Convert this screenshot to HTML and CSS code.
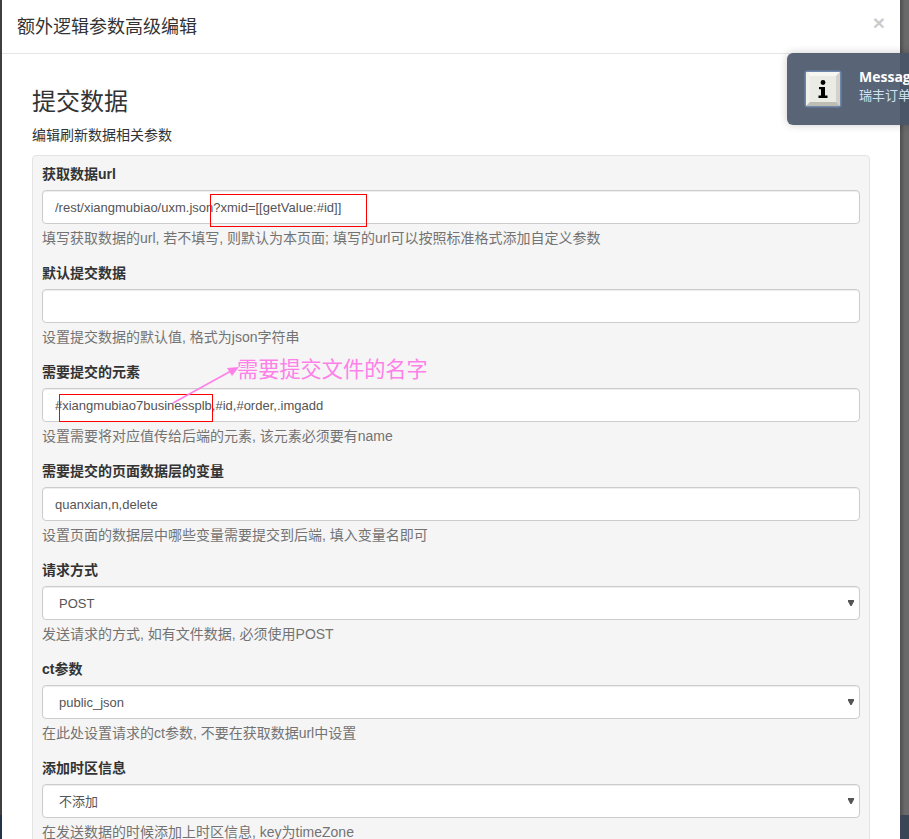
FILE: index.html
```html
<!DOCTYPE html>
<html lang="zh-CN">
<head>
<meta charset="utf-8">
<title>额外逻辑参数高级编辑</title>
<link rel="stylesheet" href="styles.css">
</head>
<body>
<div class="page">
  <div class="strip-left"></div>
  <main class="modal">
    <header class="modal-header">
      <h4 class="modal-title">额外逻辑参数高级编辑</h4>
      <span class="close">×</span>
    </header>
    <div class="modal-body">
      <h3 class="section-title">提交数据</h3>
      <p class="section-desc">编辑刷新数据相关参数</p>
      <form class="well">
        <div class="form-group">
          <label class="field-label">获取数据url</label>
          <input class="form-control" type="text" value="/rest/xiangmubiao/uxm.json?xmid=[[getValue:#id]]">
          <span class="help-block">填写获取数据的url, 若不填写, 则默认为本页面; 填写的url可以按照标准格式添加自定义参数</span>
        </div>
        <div class="form-group">
          <label class="field-label">默认提交数据</label>
          <input class="form-control" type="text" value="">
          <span class="help-block">设置提交数据的默认值, 格式为json字符串</span>
        </div>
        <div class="form-group">
          <label class="field-label">需要提交的元素</label>
          <input class="form-control" type="text" value="#xiangmubiao7businessplb,#id,#order,.imgadd">
          <span class="help-block">设置需要将对应值传给后端的元素, 该元素必须要有name</span>
        </div>
        <div class="form-group">
          <label class="field-label">需要提交的页面数据层的变量</label>
          <input class="form-control" type="text" value="quanxian,n,delete">
          <span class="help-block">设置页面的数据层中哪些变量需要提交到后端, 填入变量名即可</span>
        </div>
        <div class="form-group">
          <label class="field-label">请求方式</label>
          <select class="form-control form-select"><option>POST</option></select>
          <span class="help-block">发送请求的方式, 如有文件数据, 必须使用POST</span>
        </div>
        <div class="form-group">
          <label class="field-label">ct参数</label>
          <select class="form-control form-select"><option>public_json</option></select>
          <span class="help-block">在此处设置请求的ct参数, 不要在获取数据url中设置</span>
        </div>
        <div class="form-group">
          <label class="field-label">添加时区信息</label>
          <select class="form-control form-select"><option>不添加</option></select>
          <span class="help-block">在发送数据的时候添加上时区信息, key为timeZone</span>
        </div>
      </form>
    </div>
  </main>
  <div class="strip-right"></div>

  <div class="mark mark-url"></div>
  <div class="mark mark-element"></div>
  <svg class="arrow" width="70" height="40" viewBox="0 0 70 40" aria-hidden="true">
    <path d="M2 38 L60 6" stroke="#ff80e8" stroke-width="1.6" fill="none"/>
    <path d="M68 2 L56 3 L61 11 Z" fill="#ff80e8"/>
  </svg>
  <div class="annotation">需要提交文件的名字</div>

  <aside class="toast">
    <svg class="toast-icon" width="38" height="38" viewBox="0 0 38 38" aria-hidden="true">
      <rect x="0.5" y="0.5" width="37" height="37" rx="3" fill="#6f86ab"/>
      <rect x="2" y="2" width="34" height="34" rx="2" fill="#e6e6df"/>
      <path d="M2 2 H36 L32 6 H6 Z" fill="#f6f6f2"/>
      <path d="M2 2 V36 L6 32 V6 Z" fill="#f1f1ec"/>
      <path d="M36 2 V36 L32 32 V6 Z" fill="#d2d2ca"/>
      <path d="M2 36 H36 L32 32 H6 Z" fill="#bdbdb4"/>
      <rect x="6" y="6" width="26" height="26" fill="#ebebe6"/>
      <circle cx="19" cy="12.5" r="2.4" fill="#000"/>
      <path d="M15 17 H21 V25.5 H23.5 V28 H14.5 V25.5 H17 V19.3 H15 Z" fill="#000"/>
    </svg>
    <div class="toast-text">
      <div class="toast-title">Message</div>
      <div class="toast-msg">瑞丰订单</div>
    </div>
  </aside>
</div>
</body>
</html>
```
FILE: styles.css
```css
* { box-sizing: border-box; }
html, body { margin: 0; height: 100%; overflow: hidden; }
body {
  font-family: "Liberation Sans", "Noto Sans CJK SC", sans-serif;
  font-size: 14px;
  line-height: 20px;
  color: #333;
}
.page {
  position: relative;
  display: flex;
  width: 909px;
  height: 839px;
  overflow: hidden;
  background: #666;
}
.strip-left {
  flex: 0 0 2px;
  background: linear-gradient(#3f3f3f 0, #3f3f3f 815px, #22344a 815px);
}
.strip-right {
  flex: 1;
  background: linear-gradient(90deg, #4f4f4f, #6a6a6a 5px) top / 100% 815px no-repeat, #3a4556;
}
.modal {
  flex: 0 0 898px;
  background: #fff;
  display: flex;
  flex-direction: column;
}
.modal-header {
  flex: 0 0 54px;
  display: flex;
  align-items: center;
  justify-content: space-between;
  padding: 0 15px;
  border-bottom: 1px solid #e5e5e5;
}
.modal-title {
  margin: 0;
  font-size: 18px;
  font-weight: 400;
  line-height: 26px;
  color: #333;
}
.close {
  font-size: 21px;
  font-weight: 700;
  line-height: 1;
  color: #000;
  opacity: .2;
  margin-top: -8px;
}
.modal-body { padding: 35px 30px 0; }
.section-title {
  margin: 0 0 10px;
  font-size: 24px;
  font-weight: 400;
  line-height: 26px;
  color: #333;
}
.section-desc {
  margin: 0 0 10px;
  line-height: 20px;
  color: #333;
}
.well {
  margin: 0;
  padding: 9px;
  background: #f5f5f5;
  border: 1px solid #e3e3e3;
  border-radius: 4px;
  width: 838px;
}
.form-group { margin-bottom: 16px; }
.field-label {
  display: block;
  margin-bottom: 7px;
  font-weight: 700;
  line-height: 18px;
}
.form-control {
  display: block;
  width: 100%;
  height: 34px;
  padding: 6px 12px;
  font-family: inherit;
  font-size: 13px;
  color: #555;
  background: #fff;
  border: 1px solid #ccc;
  border-radius: 4px;
  box-shadow: inset 0 1px 1px rgba(0,0,0,.075);
}
.form-select {
  appearance: none;
  -webkit-appearance: none;
  padding-left: 16px;
  background-image: url("data:image/svg+xml,%3Csvg xmlns='http://www.w3.org/2000/svg' width='6' height='6'%3E%3Cpath d='M0 0H6V1.5L3.6 6H2.4L0 1.5Z' fill='%23555'/%3E%3C/svg%3E");
  background-repeat: no-repeat;
  background-position: right 5px center;
}
.help-block {
  display: block;
  margin-top: 4px;
  line-height: 20px;
  color: #737373;
}
.mark {
  position: absolute;
  border: 1px solid #f00;
}
.mark-url { left: 210px; top: 194px; width: 157px; height: 33px; }
.mark-element { left: 59px; top: 394px; width: 154px; height: 28px; }
.arrow { position: absolute; left: 171px; top: 365px; }
.annotation {
  position: absolute;
  left: 237px;
  top: 356px;
  font-size: 21.2px;
  line-height: 28px;
  color: #ff80e8;
  white-space: nowrap;
}
.toast {
  position: absolute;
  left: 787px;
  top: 53px;
  width: 200px;
  height: 72px;
  display: flex;
  align-items: center;
  gap: 17px;
  padding-left: 17px;
  background: rgba(73,85,106,.91);
  border-radius: 6px;
  box-shadow: 0 0 8px rgba(0,0,0,.2);
}
.toast-icon { flex: none; }
.toast-text { padding-bottom: 7px; }
.toast-title {
  font-family: "Open Sans", "Liberation Sans", sans-serif;
  font-size: 14px;
  font-weight: 700;
  line-height: 19px;
  color: #fff;
}
.toast-msg {
  font-size: 13px;
  line-height: 19px;
  color: #cfe3f2;
}
```
